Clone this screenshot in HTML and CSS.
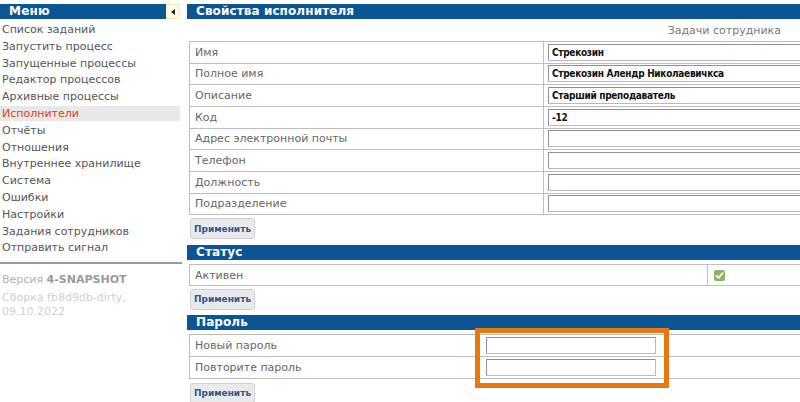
FILE: index.html
```html
<!DOCTYPE html>
<html lang="ru">
<head>
<meta charset="utf-8">
<title>Свойства исполнителя</title>
<link rel="stylesheet" href="styles.css">
</head>
<body>
<div class="page">
  <aside class="sidebar">
    <div class="menu-head">
      <div class="menu-title">Меню</div>
      <div class="menu-toggle"><span class="tri"></span></div>
    </div>
    <ul class="menu">
      <li>Список заданий</li>
      <li>Запустить процесс</li>
      <li>Запущенные процессы</li>
      <li>Редактор процессов</li>
      <li>Архивные процессы</li>
      <li class="active">Исполнители</li>
      <li>Отчёты</li>
      <li>Отношения</li>
      <li>Внутреннее хранилище</li>
      <li>Система</li>
      <li>Ошибки</li>
      <li>Настройки</li>
      <li>Задания сотрудников</li>
      <li>Отправить сигнал</li>
    </ul>
    <div class="version">
      <div class="ver">Версия <b>4-SNAPSHOT</b></div>
      <div class="build">Сборка fb8d9db-dirty,<br>09.10.2022</div>
    </div>
  </aside>

  <main class="main">
    <div class="section-head">Свойства исполнителя</div>
    <div class="links">Задачи сотрудника</div>
    <div class="grid props">
      <div class="row"><div class="lbl">Имя</div><div class="val"><div class="inp">Стрекозин</div></div></div>
      <div class="row"><div class="lbl">Полное имя</div><div class="val"><div class="inp">Стрекозин Алендр Николаевичкса</div></div></div>
      <div class="row"><div class="lbl">Описание</div><div class="val"><div class="inp">Старший преподаватель</div></div></div>
      <div class="row"><div class="lbl">Код</div><div class="val"><div class="inp">-12</div></div></div>
      <div class="row"><div class="lbl">Адрес электронной почты</div><div class="val"><div class="inp"></div></div></div>
      <div class="row"><div class="lbl">Телефон</div><div class="val"><div class="inp"></div></div></div>
      <div class="row"><div class="lbl">Должность</div><div class="val"><div class="inp"></div></div></div>
      <div class="row"><div class="lbl">Подразделение</div><div class="val"><div class="inp"></div></div></div>
    </div>
    <div class="btn-row"><button class="btn">Применить</button></div>

    <div class="section-head">Статус</div>
    <div class="grid status">
      <div class="row"><div class="lbl">Активен</div><div class="val chk-cell"><span class="chk"><svg viewBox="0 0 11 11" width="11" height="11"><path d="M2.5 5.8 L4.6 7.8 L8.6 3.2" fill="none" stroke="#fff" stroke-width="1.8" stroke-linecap="round" stroke-linejoin="round"/></svg></span></div></div>
    </div>
    <div class="btn-row mid"><button class="btn">Применить</button></div>

    <div class="section-head">Пароль</div>
    <div class="pw-wrap">
      <div class="grid pw">
        <div class="row"><div class="lbl">Новый пароль</div><div class="val"><div class="inp pw-inp"></div></div></div>
        <div class="row"><div class="lbl">Повторите пароль</div><div class="val"><div class="inp pw-inp"></div></div></div>
      </div>
      <div class="highlight"></div>
    </div>
    <div class="btn-row last"><button class="btn">Применить</button></div>
  </main>
</div>
</body>
</html>
```

FILE: styles.css
```css
html, body {
  margin: 0;
  padding: 0;
  background: #fff;
  overflow: hidden;
}
body {
  font-family: "DejaVu Sans", "Noto Sans", sans-serif;
  width: 800px;
  height: 402px;
}
.page {
  display: flex;
  padding-top: 4px;
  align-items: flex-start;
}
.sidebar {
  width: 182px;
  flex: none;
}
.menu-head {
  display: flex;
  height: 15px;
}
.menu-title {
  width: 157px;
  background: #0b5594;
  color: #fff;
  font-weight: bold;
  font-size: 12px;
  line-height: 15px;
  padding-left: 9px;
  letter-spacing: 0.2px;
}
.menu-toggle {
  width: 14px;
  background: #fffbe3;
  border: 1px solid #f3ecc0;
  box-sizing: border-box;
  height: 15px;
  display: flex;
  align-items: center;
  justify-content: center;
}
.tri {
  width: 0;
  height: 0;
  border-top: 3px solid transparent;
  border-bottom: 3px solid transparent;
  border-right: 4px solid #222;
  margin-left: -1px;
}
.menu {
  list-style: none;
  margin: 3px 0 0 0;
  padding: 0;
  width: 180px;
}
.menu li {
  font-size: 11px;
  line-height: 15px;
  height: 15px;
  margin-bottom: 1.8px;
  color: #555;
  padding-left: 2px;
}
.menu li.active {
  background: #e8e8e8;
  color: #d2471c;
}
.version {
  border-top: 2px solid #9a9a9a;
  margin-top: 7px;
  padding-top: 8px;
  font-size: 11px;
  padding-left: 2px;
}
.ver { color: #b0b0b0; line-height: 16px; }
.ver b { color: #9a9a9a; }
.build { color: #cfcfcf; line-height: 14px; margin-top: 3px; }

.main {
  width: 613px;
  margin-left: 5px;
  flex: none;
}
.section-head {
  background: #0b5594;
  color: #fff;
  font-weight: bold;
  font-size: 12px;
  line-height: 15px;
  height: 15px;
  padding-left: 9px;
  letter-spacing: 0.1px;
}
.links {
  height: 22px;
  line-height: 23px;
  text-align: right;
  padding-right: 19px;
  font-size: 11px;
  color: #777;
}
.grid {
  margin-left: 2px;
  width: 660px;
  border-top: 1px solid #bdbdbd;
  border-left: 1px solid #bdbdbd;
}
.row {
  display: flex;
  height: 21.67px;
  box-sizing: border-box;
  border-bottom: 1px solid #bdbdbd;
  font-size: 11px;
  color: #666;
}
.lbl {
  box-sizing: border-box;
  padding-left: 5px;
  border-right: 1px solid #bdbdbd;
  display: flex;
  align-items: center;
  flex: none;
}
.val {
  flex: 1;
  display: flex;
  align-items: center;
  border-right: 1px solid #bdbdbd;
}
.props .lbl { width: 354px; }
.props .val { padding-left: 4px; }
.inp {
  box-sizing: border-box;
  height: 17px;
  width: 300px;
  border: 1px solid #b8b8c4;
  border-top-color: #8e8e9c;
  border-left-color: #8e8e9c;
  border-radius: 1px;
  font-family: "DejaVu Sans Condensed", "DejaVu Sans", sans-serif;
  font-size: 10px;
  font-weight: bold;
  letter-spacing: -0.3px;
  color: #111;
  line-height: 15px;
  padding-left: 3px;
  background: #fff;
}
.btn-row {
  padding: 3px 0 0 3px;
  height: 30px;
  box-sizing: border-box;
}
.btn-row.mid { height: 29.5px; }
.btn-row.last { padding-top: 4px; height: 25px; }
.btn {
  font-family: "DejaVu Sans", sans-serif;
  font-size: 9px;
  font-weight: bold;
  color: #34558a;
  background: #e9eaec;
  border: 1px solid #cfd0d4;
  border-radius: 3px;
  height: 21px;
  width: 65px;
  padding: 0;
  display: block;
}
.status { margin-top: 4px; }
.status .row { height: 20.5px; }
.status .lbl { width: 518px; }
.chk-cell { padding-left: 6px; }
.chk {
  display: block;
  width: 11px;
  height: 11px;
  background: #8db35f;
  border-radius: 2px;
  margin-top: 1px;
}
.chk svg { display: block; }

.pw-wrap {
  position: relative;
  margin-top: 4px;
}
.pw .lbl { width: 289px; border-right-color: #d8d8d8; }
.pw .val { padding-left: 7px; }
.pw-inp { width: 170px; height: 17px; }
.highlight {
  position: absolute;
  left: 288px;
  top: -6px;
  width: 194px;
  height: 60px;
  box-sizing: border-box;
  border: 5px solid #ea760f;
}
```
